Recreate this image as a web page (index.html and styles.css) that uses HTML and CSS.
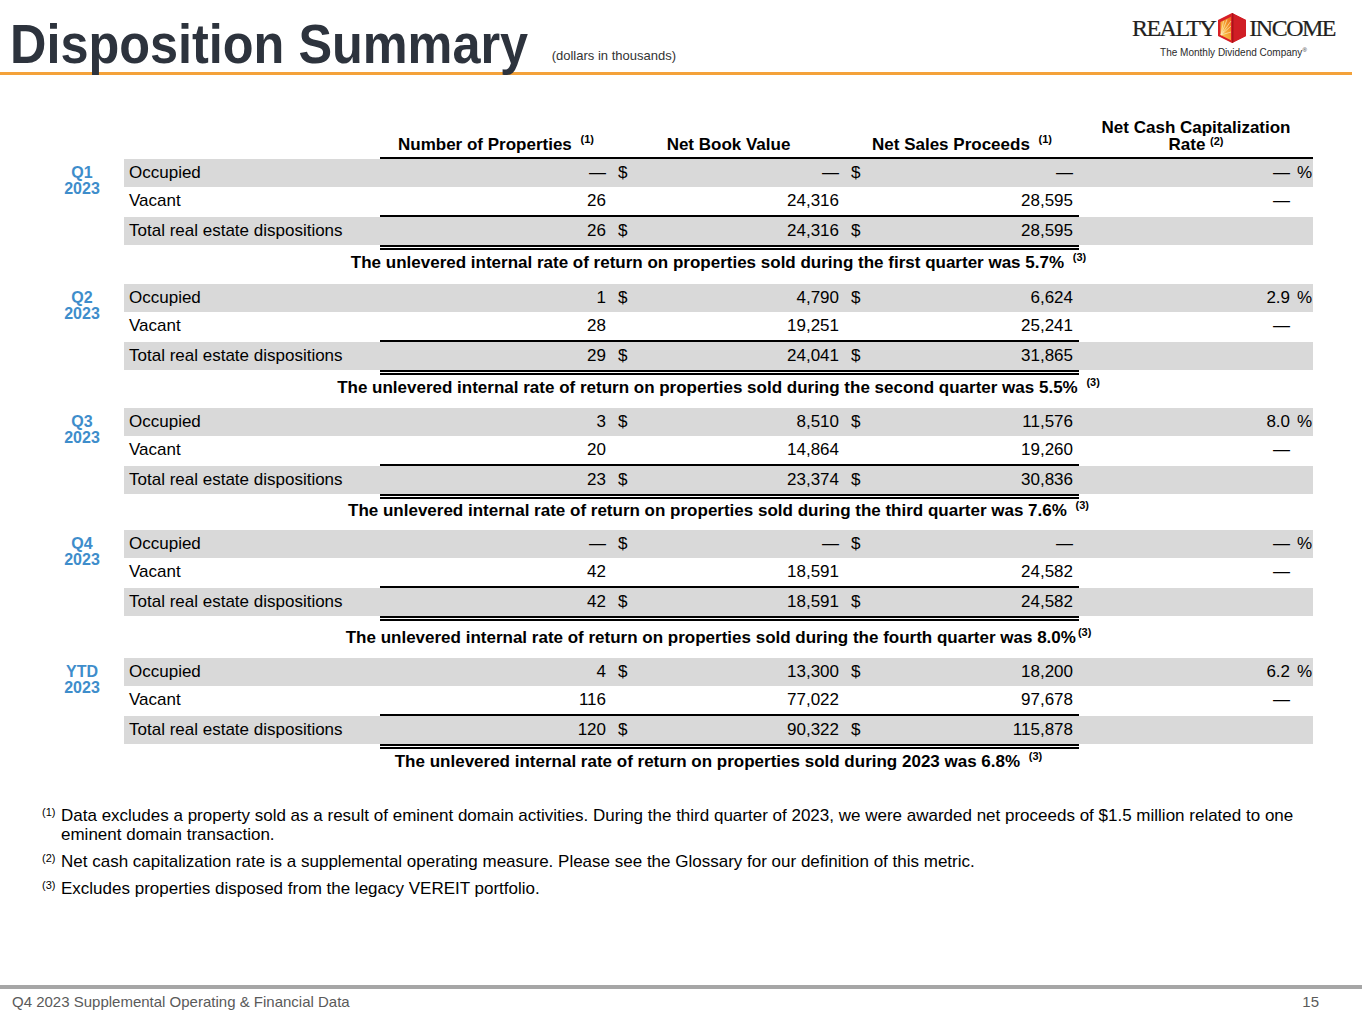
FILE: index.html
```
<!DOCTYPE html>
<html lang="en">
<head>
<meta charset="utf-8">
<title>Disposition Summary</title>
<link rel="stylesheet" href="styles.css">
</head>
<body>
<div class="page">
  <header class="top">
    <div class="title-group">
      <h1 class="title">Disposition Summary</h1>
      <span class="units">(dollars in thousands)</span>
    </div>
    <div class="logo">
      <div class="logo-main">
        <span class="word">REALTY</span>
        <svg class="house" width="28" height="30" viewBox="0 0 28 30" aria-hidden="true">
          <defs>
            <linearGradient id="hg" x1="0" y1="1" x2="1" y2="0">
              <stop offset="0" stop-color="#fcd35a"/>
              <stop offset="0.6" stop-color="#f39a2c"/>
              <stop offset="1" stop-color="#e8651f"/>
            </linearGradient>
          </defs>
          <polygon points="14,0 28,7 28,23 14,30 0,23 0,7" fill="#d71f26"/>
          <polygon points="2.5,9 13,3.8 13,27.2 2.5,22" fill="url(#hg)"/>
          <g stroke="#fff1c8" stroke-width="0.7" opacity="0.9">
            <line x1="3" y1="22" x2="13" y2="8"/>
            <line x1="3" y1="22" x2="13" y2="13"/>
            <line x1="3" y1="22" x2="13" y2="19"/>
            <line x1="3" y1="22" x2="9" y2="6.5"/>
            <line x1="3" y1="22" x2="5.5" y2="8"/>
          </g>
          <polygon points="14,0 28,7 28,23 14,30" fill="#d01e25"/>
          <polygon points="14,0 15.5,0.8 15.5,29.2 14,30" fill="#a9141b"/>
        </svg>
        <span class="word">INCOME</span>
      </div>
      <div class="tagline">The Monthly Dividend Company<span class="reg">®</span></div>
    </div>
  </header>

  <table class="disp">
    <colgroup>
      <col class="c-q"><col class="c-lbl"><col class="c-np"><col class="c-d"><col class="c-nbv"><col class="c-d2"><col class="c-nsp"><col class="c-cap"><col class="c-pct">
    </colgroup>
    <thead>
      <tr>
        <th></th>
        <th></th>
        <th class="h">Number of Properties <span class="sup">(1)</span></th>
        <th class="h" colspan="2">Net Book Value</th>
        <th class="h" colspan="2">Net Sales Proceeds <span class="sup">(1)</span></th>
        <th class="h" colspan="2">Net Cash Capitalization<br>Rate <span class="sup tight">(2)</span></th>
      </tr>
    </thead>
    <tbody>
      <tr class="g">
        <td class="q" rowspan="3">Q1<br>2023</td>
        <td class="lbl">Occupied</td><td class="n">—</td><td class="d">$</td><td class="n">—</td><td class="d">$</td><td class="n">—</td><td class="n cap">—</td><td class="pct">%</td>
      </tr>
      <tr>
        <td class="lbl">Vacant</td><td class="n">26</td><td class="d"></td><td class="n">24,316</td><td class="d"></td><td class="n">28,595</td><td class="n cap">—</td><td class="pct"></td>
      </tr>
      <tr class="g tot">
        <td class="lbl">Total real estate dispositions</td><td class="n ln">26</td><td class="d ln">$</td><td class="n ln">24,316</td><td class="d ln">$</td><td class="n ln">28,595</td><td class="n cap"></td><td class="pct"></td>
      </tr>
      <tr class="irr i1">
        <td></td><td colspan="8">The unlevered internal rate of return on properties sold during the first quarter was 5.7% <span class="sup">(3)</span></td>
      </tr>

      <tr class="g">
        <td class="q" rowspan="3">Q2<br>2023</td>
        <td class="lbl">Occupied</td><td class="n">1</td><td class="d">$</td><td class="n">4,790</td><td class="d">$</td><td class="n">6,624</td><td class="n cap">2.9</td><td class="pct">%</td>
      </tr>
      <tr>
        <td class="lbl">Vacant</td><td class="n">28</td><td class="d"></td><td class="n">19,251</td><td class="d"></td><td class="n">25,241</td><td class="n cap">—</td><td class="pct"></td>
      </tr>
      <tr class="g tot">
        <td class="lbl">Total real estate dispositions</td><td class="n ln">29</td><td class="d ln">$</td><td class="n ln">24,041</td><td class="d ln">$</td><td class="n ln">31,865</td><td class="n cap"></td><td class="pct"></td>
      </tr>
      <tr class="irr i2">
        <td></td><td colspan="8">The unlevered internal rate of return on properties sold during the second quarter was 5.5% <span class="sup">(3)</span></td>
      </tr>

      <tr class="g">
        <td class="q" rowspan="3">Q3<br>2023</td>
        <td class="lbl">Occupied</td><td class="n">3</td><td class="d">$</td><td class="n">8,510</td><td class="d">$</td><td class="n">11,576</td><td class="n cap">8.0</td><td class="pct">%</td>
      </tr>
      <tr>
        <td class="lbl">Vacant</td><td class="n">20</td><td class="d"></td><td class="n">14,864</td><td class="d"></td><td class="n">19,260</td><td class="n cap">—</td><td class="pct"></td>
      </tr>
      <tr class="g tot">
        <td class="lbl">Total real estate dispositions</td><td class="n ln">23</td><td class="d ln">$</td><td class="n ln">23,374</td><td class="d ln">$</td><td class="n ln">30,836</td><td class="n cap"></td><td class="pct"></td>
      </tr>
      <tr class="irr i3">
        <td></td><td colspan="8">The unlevered internal rate of return on properties sold during the third quarter was 7.6% <span class="sup">(3)</span></td>
      </tr>

      <tr class="g">
        <td class="q" rowspan="3">Q4<br>2023</td>
        <td class="lbl">Occupied</td><td class="n">—</td><td class="d">$</td><td class="n">—</td><td class="d">$</td><td class="n">—</td><td class="n cap">—</td><td class="pct">%</td>
      </tr>
      <tr>
        <td class="lbl">Vacant</td><td class="n">42</td><td class="d"></td><td class="n">18,591</td><td class="d"></td><td class="n">24,582</td><td class="n cap">—</td><td class="pct"></td>
      </tr>
      <tr class="g tot">
        <td class="lbl">Total real estate dispositions</td><td class="n ln">42</td><td class="d ln">$</td><td class="n ln">18,591</td><td class="d ln">$</td><td class="n ln">24,582</td><td class="n cap"></td><td class="pct"></td>
      </tr>
      <tr class="irr i4">
        <td></td><td colspan="8">The unlevered internal rate of return on properties sold during the fourth quarter was 8.0%<span class="sup close">(3)</span></td>
      </tr>

      <tr class="g">
        <td class="q" rowspan="3">YTD<br>2023</td>
        <td class="lbl">Occupied</td><td class="n">4</td><td class="d">$</td><td class="n">13,300</td><td class="d">$</td><td class="n">18,200</td><td class="n cap">6.2</td><td class="pct">%</td>
      </tr>
      <tr>
        <td class="lbl">Vacant</td><td class="n">116</td><td class="d"></td><td class="n">77,022</td><td class="d"></td><td class="n">97,678</td><td class="n cap">—</td><td class="pct"></td>
      </tr>
      <tr class="g tot">
        <td class="lbl">Total real estate dispositions</td><td class="n ln">120</td><td class="d ln">$</td><td class="n ln">90,322</td><td class="d ln">$</td><td class="n ln">115,878</td><td class="n cap"></td><td class="pct"></td>
      </tr>
      <tr class="irr i5">
        <td></td><td colspan="8">The unlevered internal rate of return on properties sold during 2023 was 6.8% <span class="sup">(3)</span></td>
      </tr>
    </tbody>
  </table>

  <section class="notes">
    <div class="note"><span class="nsup">(1)</span><p>Data excludes a property sold as a result of eminent domain activities. During the third quarter of 2023, we were awarded net proceeds of $1.5 million related to one<br>eminent domain transaction.</p></div>
    <div class="note"><span class="nsup">(2)</span><p>Net cash capitalization rate is a supplemental operating measure. Please see the Glossary for our definition of this metric.</p></div>
    <div class="note"><span class="nsup">(3)</span><p>Excludes properties disposed from the legacy VEREIT portfolio.</p></div>
  </section>

  <footer class="foot">
    <span>Q4 2023 Supplemental Operating &amp; Financial Data</span>
    <span>15</span>
  </footer>
</div>
</body>
</html>
```
FILE: styles.css
```
* { box-sizing: border-box; }

body {
  margin: 0;
  background: #fff;
  color: #000;
  font-family: "Liberation Sans", Arial, sans-serif;
}

.page {
  width: 1365px;
  height: 1024px;
  display: flex;
  flex-direction: column;
  overflow: hidden;
}

/* ---------- header ---------- */
.top {
  flex: none;
  width: 1352px;
  height: 75px;
  border-bottom: 3px solid #f4a23a;
  display: flex;
  justify-content: space-between;
  align-items: flex-start;
}

.title-group {
  align-self: stretch;
  display: flex;
  align-items: flex-end;
  padding-left: 10px;
}

.title {
  margin: 0 -34px 0 0;
  font-size: 56px;
  line-height: 56px;
  font-weight: 700;
  color: #2d333d;
  white-space: nowrap;
  transform: scaleX(0.9);
  transform-origin: left bottom;
}

.units {
  font-size: 13px;
  line-height: 15px;
  padding-bottom: 9px;
  color: #333;
}

.logo {
  padding: 13px 17px 0 0;
  display: flex;
  flex-direction: column;
  align-items: center;
}

.logo-main {
  display: flex;
  align-items: center;
  gap: 3px;
}

.word {
  font-family: "Liberation Serif", "Times New Roman", serif;
  font-size: 24px;
  line-height: 28px;
  letter-spacing: -1.5px;
  color: #231f20;
  -webkit-text-stroke: 0.2px #231f20;
}

.house {
  display: block;
}

.tagline {
  margin-top: 1px;
  font-size: 10px;
  line-height: 12px;
  color: #2a2a2a;
}

.reg {
  font-size: 6px;
  vertical-align: 4px;
}

/* ---------- table ---------- */
.disp {
  margin: 44px 0 0 40px;
  width: 1273px;
  table-layout: fixed;
  border-collapse: separate;
  border-spacing: 0;
  font-size: 17px;
}

.c-q { width: 84px; }
.c-lbl { width: 256px; }
.c-np { width: 232px; }
.c-d { width: 18px; }
.c-nbv { width: 215px; }
.c-d2 { width: 20px; }
.c-nsp { width: 214px; }
.c-cap { width: 213px; }
.c-pct { width: 21px; }

th {
  padding: 0 0 4px;
  font-weight: 700;
  line-height: 17px;
  vertical-align: bottom;
  text-align: center;
  white-space: nowrap;
}

th.h {
  border-bottom: 2px solid #000;
}

td {
  padding: 0;
  height: 28px;
  line-height: 20px;
  white-space: nowrap;
  vertical-align: middle;
}

tr.g td { background-color: #d9d9d9; }

.lbl { padding-left: 5px; }
.n { text-align: right; padding-right: 6px; }
.d { padding-left: 6px; }
.n.cap { padding-right: 2px; }
.pct { padding-left: 5px; }

tr.g td.q {
  background-color: #fff;
}

.q {
  vertical-align: top;
  text-align: center;
  font-weight: 700;
  font-size: 16px;
  color: #3e8dcb;
  line-height: 16px;
  padding-top: 6px;
}

.tot td {
  height: 35px;
  border-top: 2px solid transparent;
  border-bottom: 5px solid transparent;
  background-clip: padding-box;
}

.tot td.ln {
  border-top: 2px solid #000;
  border-bottom: 5px double #000;
}

.irr td {
  text-align: center;
  font-weight: 700;
  padding-bottom: 8px;
}

.irr.i1 td { height: 34px; }
.irr.i2 td { height: 33px; }
.irr.i3 td { height: 31px; }
.irr.i4 td { height: 37px; padding-bottom: 4px; }
.irr.i5 td { height: 33px; }

.sup {
  font-size: 11px;
  line-height: 0;
  vertical-align: 7px;
  margin-left: 4px;
}

.sup.tight { margin-left: 0; vertical-align: 5px; }
.sup.close { margin-left: 2px; }

/* ---------- notes ---------- */
.notes {
  margin: 24px 0 0 42px;
  font-size: 17px;
  line-height: 19px;
}

.note {
  display: flex;
  margin-bottom: 8px;
}

.note p {
  margin: 0;
  white-space: nowrap;
}

.nsup {
  flex: none;
  width: 19px;
  font-size: 11px;
  line-height: 12px;
}

/* ---------- footer ---------- */
.foot {
  margin-top: auto;
  width: 1362px;
  height: 39px;
  border-top: 4px solid #a6a6a6;
  display: flex;
  justify-content: space-between;
  padding: 4px 43px 0 12px;
  font-size: 15px;
  color: #5a5a5a;
}
```
